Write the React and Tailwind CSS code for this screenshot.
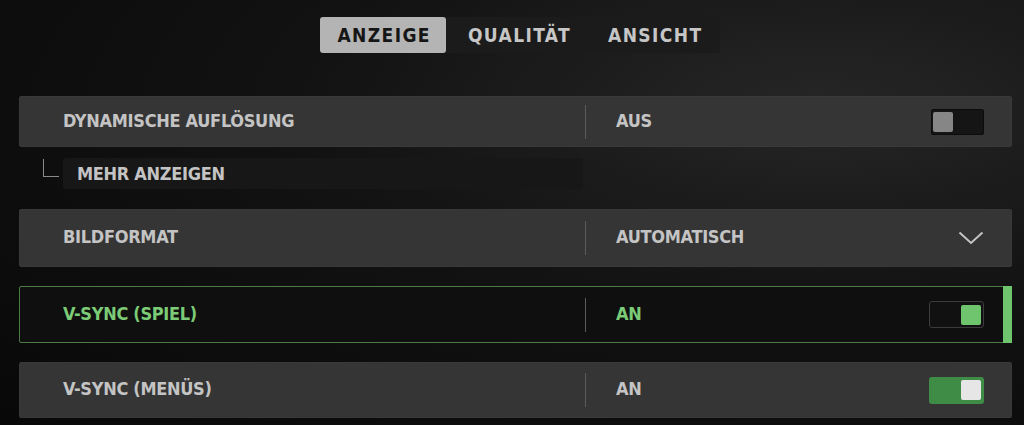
import React from 'react';

const font = { fontFamily: '"DejaVu Sans Condensed", "DejaVu Sans", sans-serif' };

const Divider = () => <div className="w-px h-[34px] bg-[#5c5c5c]" />;

const Toggle = ({ on, focused }) => {
    if (!on) {
        return (
            <div className="w-[53px] h-[26px] rounded-[2px] bg-[#151515] border border-[#0c0c0c] flex items-center px-[1px]">
                <div className="w-[20px] h-[20px] rounded-[2px] bg-[#868686]" />
            </div>
        );
    }
    if (focused) {
        return (
            <div className="w-[55px] h-[27px] rounded-[3px] bg-[#111111] border border-[#3c3c3c] flex items-center justify-end pr-[2px]">
                <div className="w-[20px] h-[20px] rounded-[2px] bg-[#6fc46e]" />
            </div>
        );
    }
    return (
        <div className="w-[55px] h-[27px] rounded-[3px] bg-[#3f8c47] flex items-center justify-end pr-[3px]">
            <div className="w-[20px] h-[20px] rounded-[2px] bg-[#e6e6e6]" />
        </div>
    );
};

const Chevron = () => (
    <svg width="26" height="14" viewBox="0 0 26 14" fill="none">
        <path d="M1.5 1.5 L13 12 L24.5 1.5" stroke="#c4c4c4" strokeWidth="2" />
    </svg>
);

const Row = ({ label, value, control, height, focused }) => (
    <div
        className={
            'relative flex items-center rounded-[2px] ' +
            (focused
                ? 'bg-[#0f0f0f] border border-[#4d7b48] text-[#7ccb76]'
                : 'bg-[#353535] border border-[#393939] text-[#c4c4c4]')
        }
        style={{ height }}
    >
        <div className="w-[565px] pl-[43px] pb-[3px] text-[18px] font-bold tracking-[-0.3px]">{label}</div>
        <Divider />
        <div className="flex-1 pl-[30px] pb-[3px] text-[18px] font-bold tracking-[-0.3px]">{value}</div>
        <div className="pr-[27px] flex items-center">{control}</div>
        {focused && <div className="absolute right-[-1px] top-[-1px] bottom-[-1px] w-[9px] bg-[#6fc46e]" />}
    </div>
);

const tabs = [
    { name: 'ANZEIGE', cls: 'bg-[#b4b4b4] text-[#161616] rounded-[3px] pl-[17px] pr-[15px]' },
    { name: 'QUALITÄT', cls: 'text-[#c6c6c6] pl-[22px] pr-[18px]' },
    { name: 'ANSICHT', cls: 'text-[#c6c6c6] pl-[19px] pr-[17px]' },
];

export default function App() {
    return (
        <div
            className="w-[1024px] h-[425px] overflow-hidden bg-[#0a0a0a] bg-[radial-gradient(ellipse_at_80%_25%,#262626_0%,#121212_45%,#080808_100%)] flex flex-col"
            style={font}
        >
            {/* Tabs */}
            <div className="flex justify-center pt-[17px] pl-[16px]">
                <div className="flex bg-[#1b1b1b] h-[36px] rounded-[2px]">
                    {tabs.map((t) => (
                        <div key={t.name} className={'h-full flex items-center text-[19px] font-bold tracking-[1.4px] ' + t.cls}>
                            {t.name}
                        </div>
                    ))}
                </div>
            </div>

            {/* Settings list */}
            <div className="flex flex-col pl-[19px] pr-[12px] mt-[43px]">
                <Row label="DYNAMISCHE AUFLÖSUNG" value="AUS" control={<Toggle on={false} />} height={51} />

                <div className="flex items-start mt-[11px] h-[31px]">
                    <div className="w-[44px] flex justify-end pr-[4px] pt-[1px]">
                        <div className="w-[16px] h-[18px] border-l border-b border-[#8a8a8a]" />
                    </div>
                    <div className="w-[520px] h-[31px] bg-[#171717] rounded-[2px] flex items-center pl-[14px] text-[18px] font-bold tracking-[-0.3px] text-[#c4c4c4]">
                        MEHR ANZEIGEN
                    </div>
                </div>

                <div className="mt-[20px]">
                    <Row label="BILDFORMAT" value="AUTOMATISCH" control={<Chevron />} height={58} />
                </div>
                <div className="mt-[19px]">
                    <Row label="V-SYNC (SPIEL)" value="AN" control={<Toggle on focused />} height={57} focused />
                </div>
                <div className="mt-[19px]">
                    <Row label="V-SYNC (MENÜS)" value="AN" control={<Toggle on />} height={56} />
                </div>
            </div>
        </div>
    );
}
